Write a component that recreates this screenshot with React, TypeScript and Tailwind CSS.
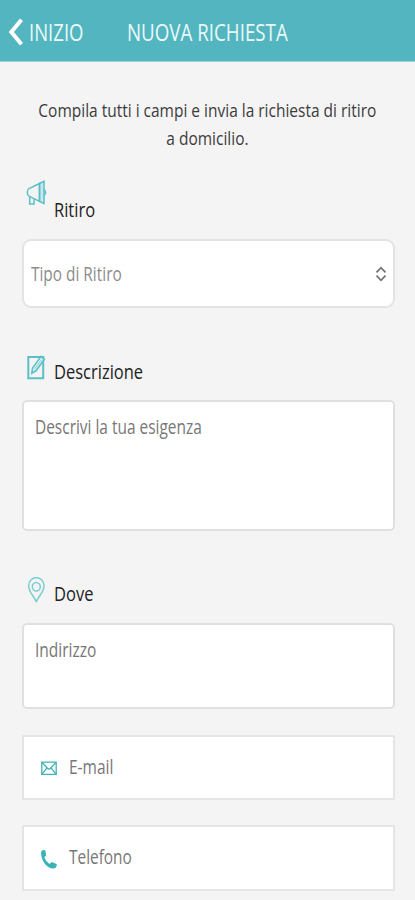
import type { ReactNode } from 'react';
import clsx from 'clsx';

type LabelProps = {
  icon: ReactNode;
  children: ReactNode;
  className?: string;
};

// Open Sans condensato orizzontalmente
function Text({ children, className }: { children: ReactNode; className?: string }) {
  return (
    <span className={clsx('block origin-left whitespace-nowrap', className)}>{children}</span>
  );
}

function FieldLabel({ icon, children, className }: LabelProps) {
  return (
    <div className={clsx('flex pl-1', className)}>
      <span className="w-[27.5px] shrink-0">{icon}</span>
      {children}
    </div>
  );
}

function MegaphoneIcon() {
  return (
    <svg width="21" height="27" viewBox="0 0 21 27" fill="none" stroke="#5dbfc6" strokeWidth="1.5">
      <path d="M13.500 3.500 18 1.300v22.200l-4.500-2.200z" fill="#c5e9eb" />
      <path d="M13.500 3.500 3 8.700Q1.300 9.600 1.300 12.400T3 16.200l10.500 5.100z" />
      <path d="M3.700 16.500v7.500h4.300v-5.200M18 9.500q3.200 3 0 6" />
    </svg>
  );
}

function EditIcon() {
  return (
    <svg width="20" height="25" viewBox="0 0 20 25" fill="none" stroke="#5cbfc5">
      <path d="M2.300 1.900h14.900v21.400H2.300z" strokeWidth="2" />
      <path d="m5.800 18.200.8-5.200L15 1.400l3.400 2.900L10 15.800z" fill="#dff2f3" strokeWidth="1.600" />
      <path d="M8.500 14.200 15.500 4.700" strokeWidth="0.700" />
    </svg>
  );
}

function PinIcon() {
  return (
    <svg width="20" height="28" viewBox="0 0 20 28" fill="none" stroke="#7bcdd2" strokeWidth="1.500">
      <path d="M10.300 25C9.200 20.700 2.600 15 2.600 8.900 2.600 4 5.900.8 10.300.8S18 4 18 8.900c0 6.100-6.600 11.800-7.700 16.100z" />
      <ellipse cx="10.300" cy="9.700" rx="4" ry="4.300" />
    </svg>
  );
}

function MailIcon() {
  return (
    <svg className="mt-0.5" width="16" height="15" viewBox="0 0 16 15" fill="none" stroke="#3fb3b7" strokeWidth="1.300">
      <path d="M.8 1.200h14.400v12.200H.8z" />
      <path d="m1 1.500 5.800 6q1.200 1.200 2.400 0l5.800-6M1 13.200l5-6.300M15 13.200l-5-6.300" />
    </svg>
  );
}

function PhoneIcon() {
  return (
    <svg className="mt-0.5" width="16" height="19" viewBox="0 0 16 19" fill="#3bb3b5">
      <path d="M1.200.6 3 .1q1.100-.2 1.400.8l.7 3.800q.1.900-.5 1.400L3.300 7.300q1.500 4.300 5.200 6.700l1.700-1.500q.7-.6 1.500-.2l3.600 1.800q.8.500.5 1.500-.7 2.600-3.200 3C6 18.800.2 10.700.1 3.300.1 1.800.3 1 1.200.6z" />
    </svg>
  );
}

export default function App() {
  return (
    <div className="h-[900px] w-[415px] overflow-hidden bg-[#f4f4f4] font-['Open_Sans',sans-serif] text-[20px] leading-7 text-[#222]">
      <header className="flex h-[62px] items-center border-b border-[#9dd2d8] bg-[#53b5bf] pt-0.5 text-[23px] text-[#e9fafa]">
        <svg className="ml-2 shrink-0" width="16" height="28" viewBox="0 0 16 28" fill="none" stroke="#fff" strokeWidth="4">
          <path d="M13.500 1.800 3.300 14l10.200 12.200" />
        </svg>
        <div className="w-[102.5px] pl-[5px]">
          <Text className="scale-x-[0.805]">INIZIO</Text>
        </div>
        <Text className="scale-x-[0.815]">NUOVA RICHIESTA</Text>
      </header>

      <main className="flex flex-col px-[22px]">
        <div className="flex h-[118px] flex-col items-center pt-[34px] text-[19px] text-[#3c3c3c]">
          <span className="scale-x-[0.815] whitespace-nowrap">Compila tutti i campi e invia la richiesta di ritiro</span>
          <span className="scale-x-[0.815] whitespace-nowrap">a domicilio.</span>
        </div>

        <FieldLabel icon={<MegaphoneIcon />} className="h-[59px]">
          <Text className="scale-x-[0.825] pt-4">Ritiro</Text>
        </FieldLabel>
        <div className="flex h-[69px] w-[373px] items-center justify-between rounded-[9px] border-2 border-[#e3e3e3] bg-white pr-1.5 pl-[7px] text-[#8c8c8c]">
          <Text className="scale-x-[0.77]">Tipo di Ritiro</Text>
          <svg width="12" height="16" viewBox="0 0 12 16" fill="none" stroke="#747474" strokeWidth="1.800">
            <path d="M1.500 6.300 6 1.700l4.500 4.600M1.500 9.700 6 14.300l4.500-4.600" />
          </svg>
        </div>

        <FieldLabel icon={<EditIcon />} className="mt-[47px] h-[45px]">
          <Text className="scale-x-[0.825] pt-[3px]">Descrizione</Text>
        </FieldLabel>
        <div className="h-[131px] w-[373px] rounded-[5px] border-2 border-[#e0e0e0] bg-white pt-[11px] pl-[11px] text-[#777]">
          <Text className="scale-x-[0.772]">Descrivi la tua esigenza</Text>
        </div>

        <FieldLabel icon={<PinIcon />} className="mt-[46px] h-[46px]">
          <Text className="scale-x-[0.825] pt-[3px]">Dove</Text>
        </FieldLabel>
        <div className="h-[86px] w-[373px] rounded-[5px] border-2 border-[#e0e0e0] bg-white pt-[11px] pl-[11px] text-[#777]">
          <Text className="scale-x-[0.775]">Indirizzo</Text>
        </div>

        <div className="mt-[26px] flex h-[65px] w-[373px] items-center gap-3 border-2 border-[#e5e5e5] bg-white pl-[17px] text-[#777]">
          <MailIcon />
          <Text className="scale-x-[0.775] pb-px">E-mail</Text>
        </div>
        <div className="mt-[25px] flex h-[66px] w-[373px] items-center gap-3 border-2 border-[#e5e5e5] bg-white pl-[17px] text-[#777]">
          <PhoneIcon />
          <Text className="scale-x-[0.77] pb-0.5">Telefono</Text>
        </div>
      </main>
    </div>
  );
}
